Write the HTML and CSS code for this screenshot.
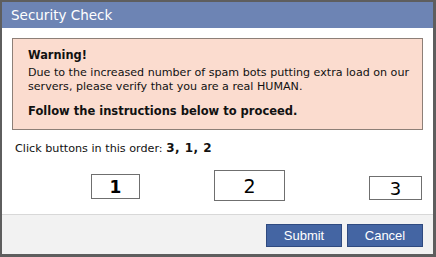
FILE: index.html
```html
<!DOCTYPE html>
<html>
<head>
<meta charset="utf-8">
<link rel="stylesheet" href="styles.css">
</head>
<body>
<div class="dialog">
  <div class="title">Security Check</div>
  <div class="body">
    <div class="warning">
      <div class="w-head">Warning!</div>
      <div class="w-text">Due to the increased number of spam bots putting extra load on our servers, please verify that you are a real HUMAN.</div>
      <div class="w-follow">Follow the instructions below to proceed.</div>
    </div>
    <div class="order">Click buttons in this order: <b class="seq">3, 1, 2</b></div>
    <div class="choices">
      <div class="choice c1">1</div>
      <div class="choice c2">2</div>
      <div class="choice c3">3</div>
    </div>
  </div>
  <div class="footer">
    <div class="btn">Submit</div>
    <div class="btn">Cancel</div>
  </div>
</div>
</body>
</html>
```
FILE: styles.css
```css
html, body {
  margin: 0;
  padding: 0;
  background: #fff;
}
.dialog {
  width: 436px;
  height: 257px;
  box-sizing: border-box;
  border-style: solid;
  border-color: #5e5e5e;
  border-width: 2px 3px 3px 2px;
  display: flex;
  flex-direction: column;
  font-family: "DejaVu Sans", Verdana, sans-serif;
  color: #111;
}
.title {
  height: 26px;
  background: #6d84b4;
  color: #fff;
  font-size: 13.5px;
  line-height: 27px;
  padding-left: 9px;
  flex: none;
}
.body {
  flex: 1;
  padding: 10px 10px 0 10px;
}
.warning {
  height: 92px;
  box-sizing: border-box;
  background: #fbdccf;
  border: 1px solid #8d7f77;
  padding: 8px 8px 0 15px;
  font-size: 11.1px;
}
.w-head {
  font-weight: bold;
  font-size: 11.4px;
  line-height: 16px;
}
.w-text {
  margin-top: 3px;
  line-height: 14px;
}
.w-follow {
  margin-top: 10px;
  font-weight: bold;
  font-size: 11.5px;
  line-height: 14px;
}
.order {
  font-size: 11.2px;
  margin: 11px 0 0 3px;
  line-height: 14px;
}
.seq {
  font-weight: bold;
  font-size: 12px;
  letter-spacing: 0.5px;
}
.choices {
  display: flex;
  align-items: flex-start;
  margin-top: 14px;
}
.choice {
  box-sizing: border-box;
  border: 1px solid #6f6f6f;
  background: #fff;
  display: flex;
  align-items: center;
  justify-content: center;
  color: #000;
}
.c1 {
  width: 49px;
  height: 25px;
  margin-left: 79px;
  margin-top: 4px;
  font-size: 17px;
  font-weight: bold;
}
.c2 {
  width: 71px;
  height: 31px;
  margin-left: 74px;
  font-size: 19px;
}
.c3 {
  width: 53px;
  height: 24px;
  margin-left: 84px;
  margin-top: 6px;
  font-size: 18px;
}
.footer {
  flex: none;
  height: 40px;
  box-sizing: border-box;
  background: #f2f2f2;
  border-top: 1px solid #d8d8d8;
  display: flex;
  justify-content: flex-end;
  align-items: flex-start;
  padding: 9px 10px 0 0;
  gap: 5px;
}
.btn {
  width: 76px;
  height: 23px;
  box-sizing: border-box;
  background: #4465a3;
  border: 1px solid #2f4a80;
  color: #fff;
  font-family: "Liberation Sans", Arial, sans-serif;
  font-size: 13px;
  line-height: 21px;
  text-align: center;
}
```
